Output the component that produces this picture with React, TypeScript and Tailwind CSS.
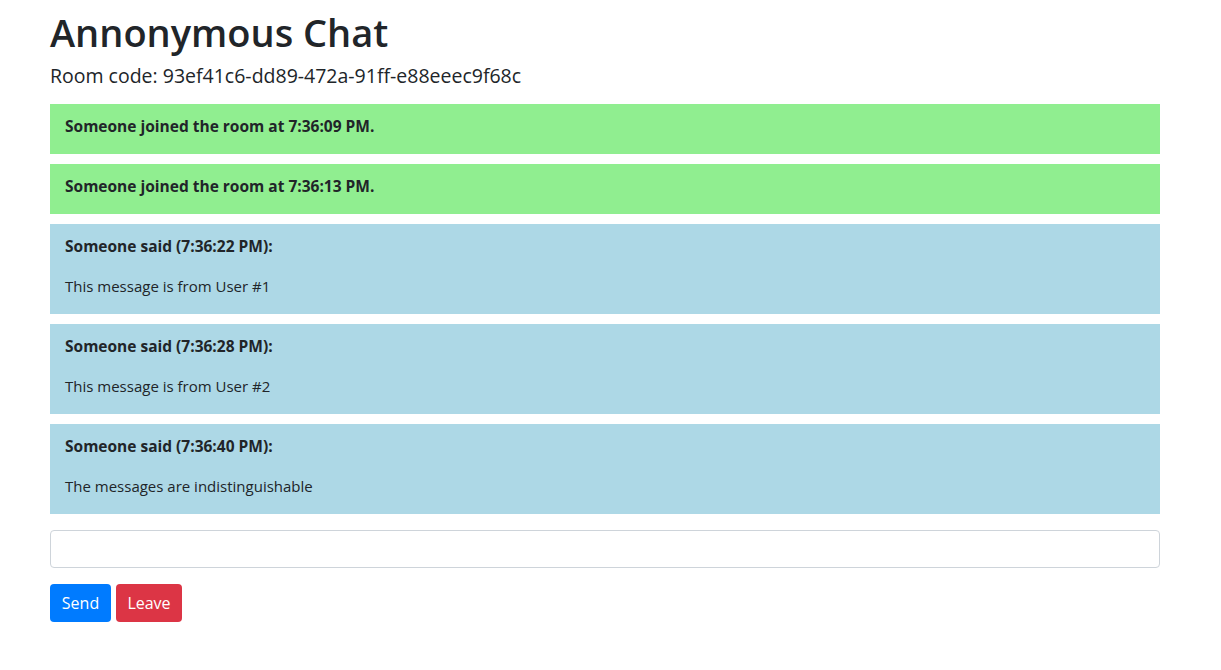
const events = [
  { kind: "join", title: "Someone joined the room at 7:36:09 PM." },
  { kind: "join", title: "Someone joined the room at 7:36:13 PM." },
  { kind: "msg", title: "Someone said (7:36:22 PM):", body: "This message is from User #1" },
  { kind: "msg", title: "Someone said (7:36:28 PM):", body: "This message is from User #2" },
  { kind: "msg", title: "Someone said (7:36:40 PM):", body: "The messages are indistinguishable" },
];

export default function App() {
  return (
    <div className="min-h-screen bg-white font-['Open_Sans',sans-serif] text-[#212529]">
      <div className="pl-[50px] pt-[8px]">
        <div className="w-[1110px]">
          <h1 className="text-[38px] leading-[48px] font-semibold mb-2">Annonymous Chat</h1>
          <h5 className="text-[19.5px] leading-[24px] font-medium mb-4">
            Room code: 93ef41c6-dd89-472a-91ff-e88eeec9f68c
          </h5>

          <div className="flex flex-col gap-[10px]">
            {events.map((e, i) => (
              <div
                key={i}
                className={
                  e.kind === "join"
                    ? "bg-[#90ee90] px-[15px] pt-[10px]"
                    : "bg-[#add8e6] px-[15px] pt-[10px]"
                }
              >
                <p className="text-[15.5px] leading-6 font-bold mb-4">{e.title}</p>
                {e.body && <p className="text-[15px] leading-6 mb-4">{e.body}</p>}
              </div>
            ))}
          </div>

          <input
            type="text"
            className="mt-4 block w-full h-[38px] border border-[#ced4da] rounded px-3 outline-none"
          />

          <div className="mt-4 flex gap-[5px]">
            <button className="h-[38px] w-[61px] rounded bg-[#007bff] text-white text-base">Send</button>
            <button className="h-[38px] w-[66px] rounded bg-[#dc3545] text-white text-base">Leave</button>
          </div>
        </div>
      </div>
    </div>
  );
}
